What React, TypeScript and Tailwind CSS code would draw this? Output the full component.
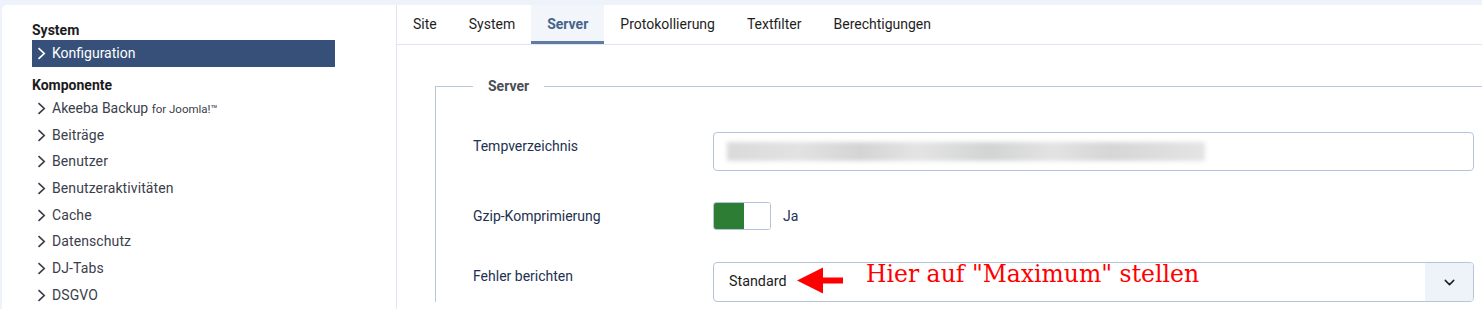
import { ChevronDown } from 'lucide-react';

const items = ['Beiträge', 'Benutzer', 'Benutzeraktivitäten', 'Cache', 'Datenschutz', 'DJ-Tabs', 'DSGVO'];
const tabs = ['Site', 'System', 'Server', 'Protokollierung', 'Textfilter', 'Berechtigungen'];

function Chevron({ className }: { className?: string }) {
  return (
    <svg width="9" height="13" viewBox="0 0 9 13" className={className} fill="none">
      <path d="M1.5 1.2 7.2 6.5 1.5 11.8" stroke="currentColor" strokeWidth="1.7" />
    </svg>
  );
}

function Sidebar() {
  return (
    <aside className="w-[395px] shrink-0 border-r border-[#dfe6f0] pl-[30px] pt-[15px]">
      <div className="h-5 text-[14px] leading-5 font-bold text-[#1c1c1c]">System</div>
      <div className="flex h-[27px] w-[303px] items-center bg-[#375079] pl-[5px] text-white">
        <Chevron className="text-white" />
        <span className="ml-[6px] text-[14px]">Konfiguration</span>
      </div>
      <div className="mt-2 h-5 text-[14px] leading-5 font-bold text-[#1c1c1c]">Komponente</div>
      <ul>
        <li className="flex h-[26.7px] items-center pl-[5px] text-[#3b404b]">
          <Chevron />
          <span className="ml-[6px] text-[14px]">
            Akeeba Backup <span className="text-[11.5px]">for Joomla!™</span>
          </span>
        </li>
        {items.map((item) => (
          <li key={item} className="flex h-[26.7px] items-center pl-[5px] text-[#3b404b]">
            <Chevron />
            <span className="ml-[6px] text-[14px] tracking-[0.1px]">{item}</span>
          </li>
        ))}
      </ul>
    </aside>
  );
}

function Tabs() {
  return (
    <div className="flex h-10 border-b border-[#dfe6f0]">
      {tabs.map((tab) =>
        tab === 'Server' ? (
          <div
            key={tab}
            className="flex items-center border-b-[3px] border-[#5d7ba4] bg-[#f2f5f9] px-4 pt-[3px] text-[14px] font-bold text-[#46638d]"
          >
            {tab}
          </div>
        ) : (
          <div key={tab} className="flex items-center px-4 text-[14px] text-[#1e1e1e]">
            {tab}
          </div>
        )
      )}
    </div>
  );
}

function Row({ label, children }: { label: string; children: React.ReactNode }) {
  return (
    <div className="flex">
      <div className="w-[240px] shrink-0 pt-1 text-[14px] leading-5 text-[#22314f]">{label}</div>
      <div className="flex-1">{children}</div>
    </div>
  );
}

export default function App() {
  return (
    <div className="h-[309px] overflow-hidden bg-[#eef3fb] pt-[5px] pl-[2px]" style={{ fontFamily: 'Roboto, "Liberation Sans", sans-serif' }}>
      <div className="flex h-[304px] overflow-hidden rounded-tl-[5px] bg-white">
        <Sidebar />
        <main className="flex-1">
          <Tabs />
          <div className="pl-[38px] pt-[31px]">
            <fieldset className="border border-r-0 border-b-0 border-[#b9c7db] pr-2">
              <legend className="ml-[37px] px-[15px] text-[14px] leading-5 font-bold text-[#4a4e55]">Server</legend>
              <div className="flex flex-col pl-[37px] pt-[36px]">
                <Row label="Tempverzeichnis">
                  <div className="flex h-[39px] items-center rounded-[4px] border border-[#b6c4da] px-[13px]">
                    <div className="h-[19px] w-[478px] blur-[2px] bg-[linear-gradient(90deg,#dadada_0%,#e2e2e2_15%,#d4d4d4_28%,#e4e4e4_40%,#d2d3d3_55%,#e3e3e3_68%,#d6d6d6_80%,#e4e4e4_100%)]" />
                  </div>
                </Row>
                <div className="mt-[31px]">
                  <Row label="Gzip-Komprimierung">
                    <div className="flex items-center">
                      <div className="flex h-7 w-[58px] overflow-hidden rounded-[3px] border border-[#b6c4da]">
                        <div className="w-[30px] bg-[#2e7d34]" />
                        <div className="flex-1 bg-white" />
                      </div>
                      <span className="ml-3 text-[14px] text-[#22314f]">Ja</span>
                    </div>
                  </Row>
                </div>
                <div className="mt-[32px]">
                  <Row label="Fehler berichten">
                    <div className="relative flex h-10 items-center rounded-[4px] border border-[#b6c4da]">
                      <span className="pl-[15px] text-[14.3px] text-[#1c1c1c]">Standard</span>
                      <div className="ml-auto flex h-full w-12 items-center justify-center rounded-r-[3px] bg-[#eef2f9]">
                        <ChevronDown size={17} strokeWidth={2} className="text-[#1c1c1c]" />
                      </div>
                      <svg width="48" height="27" viewBox="0 0 48 27" className="absolute left-[83px] top-[4px]">
                        <polygon points="0,13.5 26,0.5 26,10.5 46,10.5 46,16.5 26,16.5 26,26.5" fill="#ff0000" />
                      </svg>
                      <span
                        className="absolute left-[152px] -top-[3px] whitespace-nowrap text-[23.5px] leading-7 text-[#ff0000]"
                        style={{ fontFamily: '"DejaVu Serif", serif' }}
                      >
                        Hier auf "Maximum" stellen
                      </span>
                    </div>
                  </Row>
                </div>
              </div>
            </fieldset>
          </div>
        </main>
      </div>
    </div>
  );
}
